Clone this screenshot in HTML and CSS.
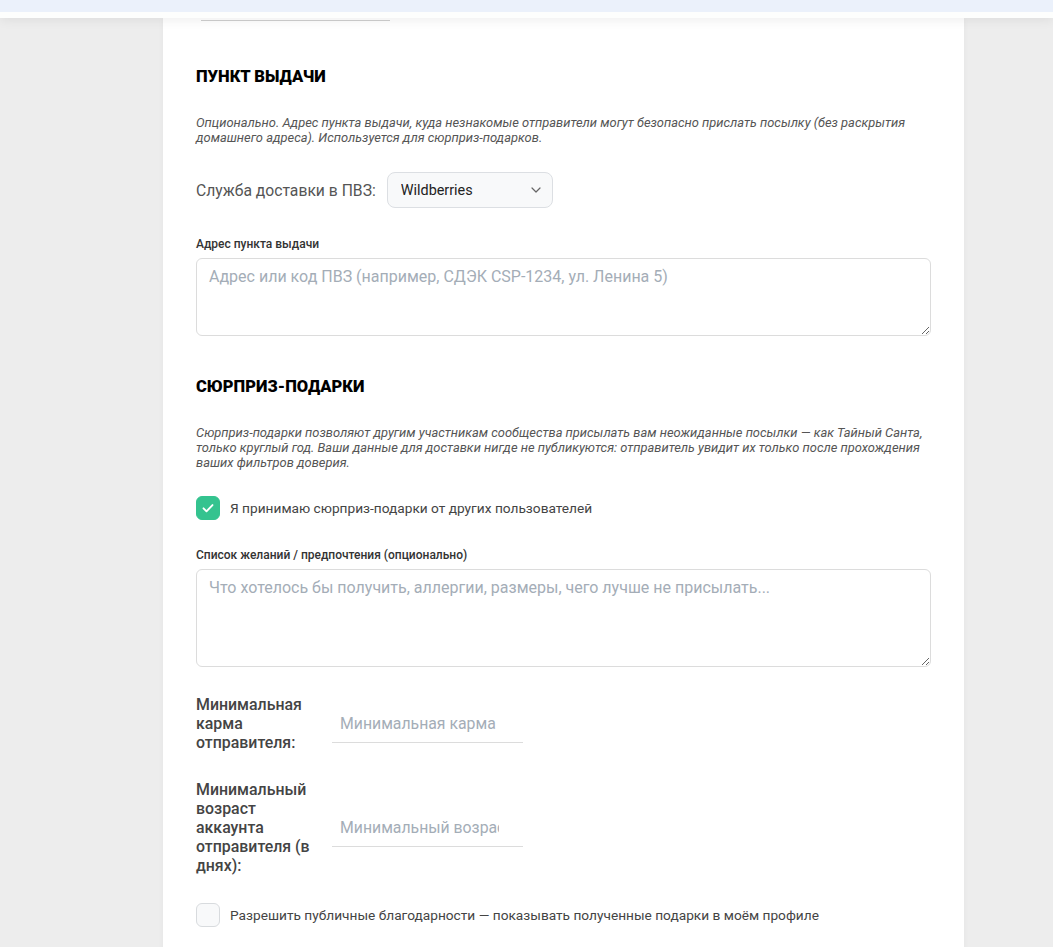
FILE: index.html
```html
<!DOCTYPE html>
<html lang="ru">
<head>
    <meta charset="UTF-8">
    <meta name="viewport" content="width=device-width, initial-scale=1.0">
    <title>Настройки доставки</title>
    <link rel="stylesheet" href="styles.css">
</head>
<body>
    <header class="topbar"></header>

    <main class="card">
        <div class="prev-input"></div>

        <section class="section">
            <h2 class="section-title">Пункт выдачи</h2>
            <p class="hint">Опционально. Адрес пункта выдачи, куда незнакомые отправители могут безопасно прислать посылку (без раскрытия домашнего адреса). Используется для сюрприз-подарков.</p>

            <div class="inline-row">
                <label for="pvz-service" class="inline-label">Служба доставки в ПВЗ:</label>
                <div class="select-wrap">
                    <select id="pvz-service" class="select">
                        <option>Wildberries</option>
                        <option>Ozon</option>
                        <option>СДЭК</option>
                        <option>Boxberry</option>
                    </select>
                    <svg class="chevron" width="10" height="6" viewBox="0 0 10 6"><path d="M1 1l4 4 4-4" fill="none" stroke="#666" stroke-width="1.2" stroke-linecap="round" stroke-linejoin="round"/></svg>
                </div>
            </div>

            <div class="field">
                <label for="pvz-address" class="field-label">Адрес пункта выдачи</label>
                <textarea id="pvz-address" class="textarea textarea-short" placeholder="Адрес или код ПВЗ (например, СДЭК CSP-1234, ул. Ленина 5)"></textarea>
            </div>
        </section>

        <section class="section section-next">
            <h2 class="section-title">Сюрприз-подарки</h2>
            <p class="hint">Сюрприз-подарки позволяют другим участникам сообщества присылать вам неожиданные посылки — как Тайный Санта, только круглый год. Ваши данные для доставки нигде не публикуются: отправитель увидит их только после прохождения ваших фильтров доверия.</p>

            <label class="check-row check-first">
                <span class="checkbox checked">
                    <svg width="16" height="16" viewBox="0 0 16 16"><path d="M3.5 8.3l3 3 6-6.2" fill="none" stroke="#fff" stroke-width="1.9" stroke-linecap="round" stroke-linejoin="round"/></svg>
                </span>
                <span class="check-text">Я принимаю сюрприз-подарки от других пользователей</span>
            </label>

            <div class="field">
                <label for="wishlist" class="field-label">Список желаний / предпочтения (опционально)</label>
                <textarea id="wishlist" class="textarea textarea-tall" placeholder="Что хотелось бы получить, аллергии, размеры, чего лучше не присылать..."></textarea>
            </div>

            <div class="pair-row">
                <label for="min-karma" class="pair-label">Минимальная карма отправителя:</label>
                <input id="min-karma" type="number" class="line-input" placeholder="Минимальная карма">
            </div>

            <div class="pair-row">
                <label for="min-age" class="pair-label">Минимальный возраст аккаунта отправителя (в днях):</label>
                <input id="min-age" type="number" class="line-input" placeholder="Минимальный возраст аккаунта">
            </div>

            <label class="check-row">
                <span class="checkbox"></span>
                <span class="check-text">Разрешить публичные благодарности — показывать полученные подарки в моём профиле</span>
            </label>
        </section>
    </main>
</body>
</html>
```

FILE: styles.css
```css
body {
    font-family: Roboto, "Noto Sans", Arial, sans-serif;
    margin: 0;
    padding: 18px 0 0;
    background-color: #ededed;
    color: #333;
}

/* Top bar */
.topbar {
    position: fixed;
    top: 0;
    left: 0;
    right: 0;
    height: 12px;
    background-color: #ebf1fb;
    border-bottom: 6px solid #fdfefd;
    box-shadow: 0 2px 12px rgba(0, 0, 0, 0.07);
    z-index: 5;
}

/* Card */
.card {
    margin-left: 163px;
    width: 735px;
    padding: 0 33px 40px;
    background-color: #fff;
    box-shadow: 0 0 6px rgba(0, 0, 0, 0.04);
    min-height: 1000px;
}
.prev-input {
    margin-left: 5px;
    width: 189px;
    height: 2px;
    border-bottom: 1px solid #cfcfcf;
}

.section {
    display: flex;
    flex-direction: column;
    gap: 28px;
    padding-top: 46px;
}
.section-next {
    padding-top: 41px;
}
.section-title {
    margin: 0;
    font-size: 16.5px;
    line-height: 20px;
    font-weight: 900;
    text-transform: uppercase;
    color: #000;
}
.hint {
    margin: 0;
    font-size: 12.9px;
    line-height: 15px;
    font-style: italic;
    color: #555;
}

/* Select row */
.inline-row {
    display: flex;
    align-items: center;
    gap: 11px;
    margin-top: -1px;
}
.inline-label {
    font-size: 15.7px;
    color: #555;
}
.select-wrap {
    position: relative;
}
.select {
    appearance: none;
    -webkit-appearance: none;
    width: 166px;
    height: 36px;
    padding: 0 30px 0 13px;
    font-family: inherit;
    font-size: 14.4px;
    color: #222;
    background-color: #f8f9fa;
    border: 1px solid #dcdfe3;
    border-radius: 8px;
}
.chevron {
    position: absolute;
    right: 12px;
    top: 15px;
    pointer-events: none;
}

/* Labelled textareas */
.field {
    display: flex;
    flex-direction: column;
    gap: 6px;
}
.field-label {
    font-size: 12px;
    line-height: 16px;
    font-weight: 500;
    color: #333;
}
.textarea {
    box-sizing: border-box;
    width: 100%;
    padding: 8px 12px;
    font-family: inherit;
    font-size: 16px;
    line-height: 20px;
    color: #333;
    border: 1px solid #dcdcdc;
    border-radius: 6px;
    resize: vertical;
}
.textarea::placeholder {
    color: #a4adb7;
}
.textarea-short {
    height: 78px;
}
.textarea-tall {
    height: 98px;
}

/* Checkboxes */
.check-row {
    display: flex;
    align-items: center;
    gap: 10px;
    cursor: pointer;
}
.check-first {
    margin-top: -2px;
    margin-bottom: -1px;
}
.checkbox {
    box-sizing: border-box;
    width: 24px;
    height: 24px;
    border-radius: 6px;
    border: 1px solid #d8dbde;
    background-color: #f8f9fa;
    display: flex;
    align-items: center;
    justify-content: center;
}
.checkbox.checked {
    background-color: #34c38f;
    border-color: #34c38f;
}
.check-text {
    font-size: 13.7px;
    color: #444;
}

/* Label + underlined input */
.pair-row {
    display: flex;
    align-items: center;
    gap: 16px;
}
.pair-label {
    width: 120px;
    font-size: 15.9px;
    line-height: 19px;
    font-weight: 500;
    color: #444;
}
.line-input {
    box-sizing: border-box;
    width: 191px;
    height: 38px;
    padding: 0 24px 0 8px;
    font-family: inherit;
    font-size: 15.8px;
    color: #333;
    border: none;
    border-bottom: 1px solid #dcdcdc;
    background: transparent;
    outline: none;
    -moz-appearance: textfield;
}
.line-input::placeholder {
    color: #a4adb7;
}
.line-input::-webkit-outer-spin-button,
.line-input::-webkit-inner-spin-button {
    -webkit-appearance: none;
    margin: 0;
}
```
